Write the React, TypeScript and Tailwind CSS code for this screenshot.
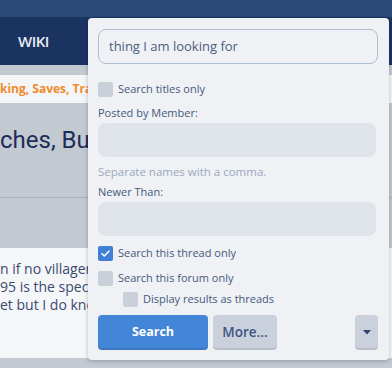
import React from "react";

function Check({ checked }: { checked?: boolean }) {
  return (
    <span
      className={
        "flex h-[15px] w-[15px] shrink-0 items-center justify-center rounded-[2px] " +
        (checked ? "bg-[#3f80d6]" : "bg-[#c9d0da]")
      }
    >
      {checked && (
        <svg width="11" height="11" viewBox="0 0 12 12" fill="none">
          <path d="M2.2 6.3l2.5 2.4 5-5.2" stroke="#fff" strokeWidth="1.8" strokeLinecap="round" strokeLinejoin="round" />
        </svg>
      )}
    </span>
  );
}

function CheckRow({ label, checked, className }: { label: string; checked?: boolean; className: string }) {
  return (
    <div className={"flex h-[16px] items-center gap-[5px] text-[11px] leading-[16px] text-[#46597b] " + className}>
      <Check checked={checked} />
      <span>{label}</span>
    </div>
  );
}

export default function App() {
  return (
    <div className="relative h-[368px] w-[392px] overflow-hidden bg-[#c3c9d1] font-['Open_Sans',sans-serif]">
      {/* page behind the menu, cut where the menu covers it */}
      <div className="h-[17px] bg-[#2b4a78]" />
      <div className="flex h-[48px] items-center bg-[#1b3361] pl-[18px]">
        <span className="text-[15px] font-semibold tracking-[-0.5px] text-[#e8ecf3]">WIKI</span>
      </div>
      <div className="h-[10px]" />
      <div className="flex h-[28px] items-center bg-[#f4f5f7]">
        <span className="w-[88px] overflow-hidden whitespace-nowrap text-[12px] font-bold text-[#f08a2c]">king, Saves, Trading</span>
      </div>
      <div className="h-[94px] pt-[22px]">
        <div className="w-[88px] overflow-hidden whitespace-nowrap font-['Roboto',sans-serif] text-[24px] leading-[30px] text-[#1c2d59]">ches, Bugs, and more</div>
      </div>
      <div className="h-px bg-[#a9b3c1]" />
      <div className="h-[50px]" />
      <div className="h-[110px] bg-[#f5f6f8] pt-[12px]">
        <div className="w-[88px] overflow-hidden whitespace-nowrap text-[14px] leading-[18px] text-[#3a4b70]">
          <div>n if no villager can</div>
          <div>95 is the special one</div>
          <div>et but I do know</div>
        </div>
      </div>

      {/* search menu */}
      <div className="absolute left-[88px] top-[18px] flex h-[342px] w-[301px] flex-col rounded-[4px] bg-[#eff1f5] px-[10px] pt-[11px] shadow-[0_1px_4px_rgba(0,0,0,0.25)]">
        <div className="flex h-[35px] w-[280px] items-center rounded-[8px] border border-[#aebcd2] px-[10px] text-[13px] text-[#4b5e80]">
          thing I am looking for
        </div>

        <CheckRow label="Search titles only" className="mt-[17px]" />

        <div className="mt-[8px] text-[11px] leading-[16px] text-[#46597b]">Posted by Member:</div>
        <div className="mt-[2px] h-[34px] w-[278px] rounded-[8px] bg-[#dfe3ea]" />
        <div className="mt-[7px] text-[11.5px] leading-[16px] text-[#9ba8bd]">Separate names with a comma.</div>
        <div className="mt-[4px] text-[11px] leading-[16px] text-[#46597b]">Newer Than:</div>
        <div className="mt-[2px] h-[34px] w-[278px] rounded-[8px] bg-[#dfe3ea]" />

        <CheckRow label="Search this thread only" checked className="mt-[9px]" />
        <CheckRow label="Search this forum only" className="mt-[9px]" />
        <CheckRow label="Display results as threads" className="mt-[5px] pl-[25px]" />

        <div className="mt-[8px] flex items-start">
          <button className="flex h-[35px] w-[110px] items-center justify-center rounded-[4px] bg-[#4386d8] text-[12.5px] font-bold text-white shadow-[inset_0_-2px_0_rgba(0,0,0,0.1)]">
            Search
          </button>
          <button className="ml-[5px] flex h-[35px] w-[64px] items-center justify-center rounded-[4px] bg-[#cad1dc] text-[13.5px] font-semibold text-[#3d5580] shadow-[inset_0_-2px_0_rgba(0,0,0,0.08)]">
            More...
          </button>
          <button className="ml-auto mr-[1px] flex h-[35px] w-[23px] items-center justify-center rounded-[4px] bg-[#cad1dc] shadow-[inset_0_-2px_0_rgba(0,0,0,0.08)]">
            <svg width="8" height="5" viewBox="0 0 8 5">
              <path d="M0 0h8L4 4.5z" fill="#2c4472" />
            </svg>
          </button>
        </div>
      </div>
    </div>
  );
}
